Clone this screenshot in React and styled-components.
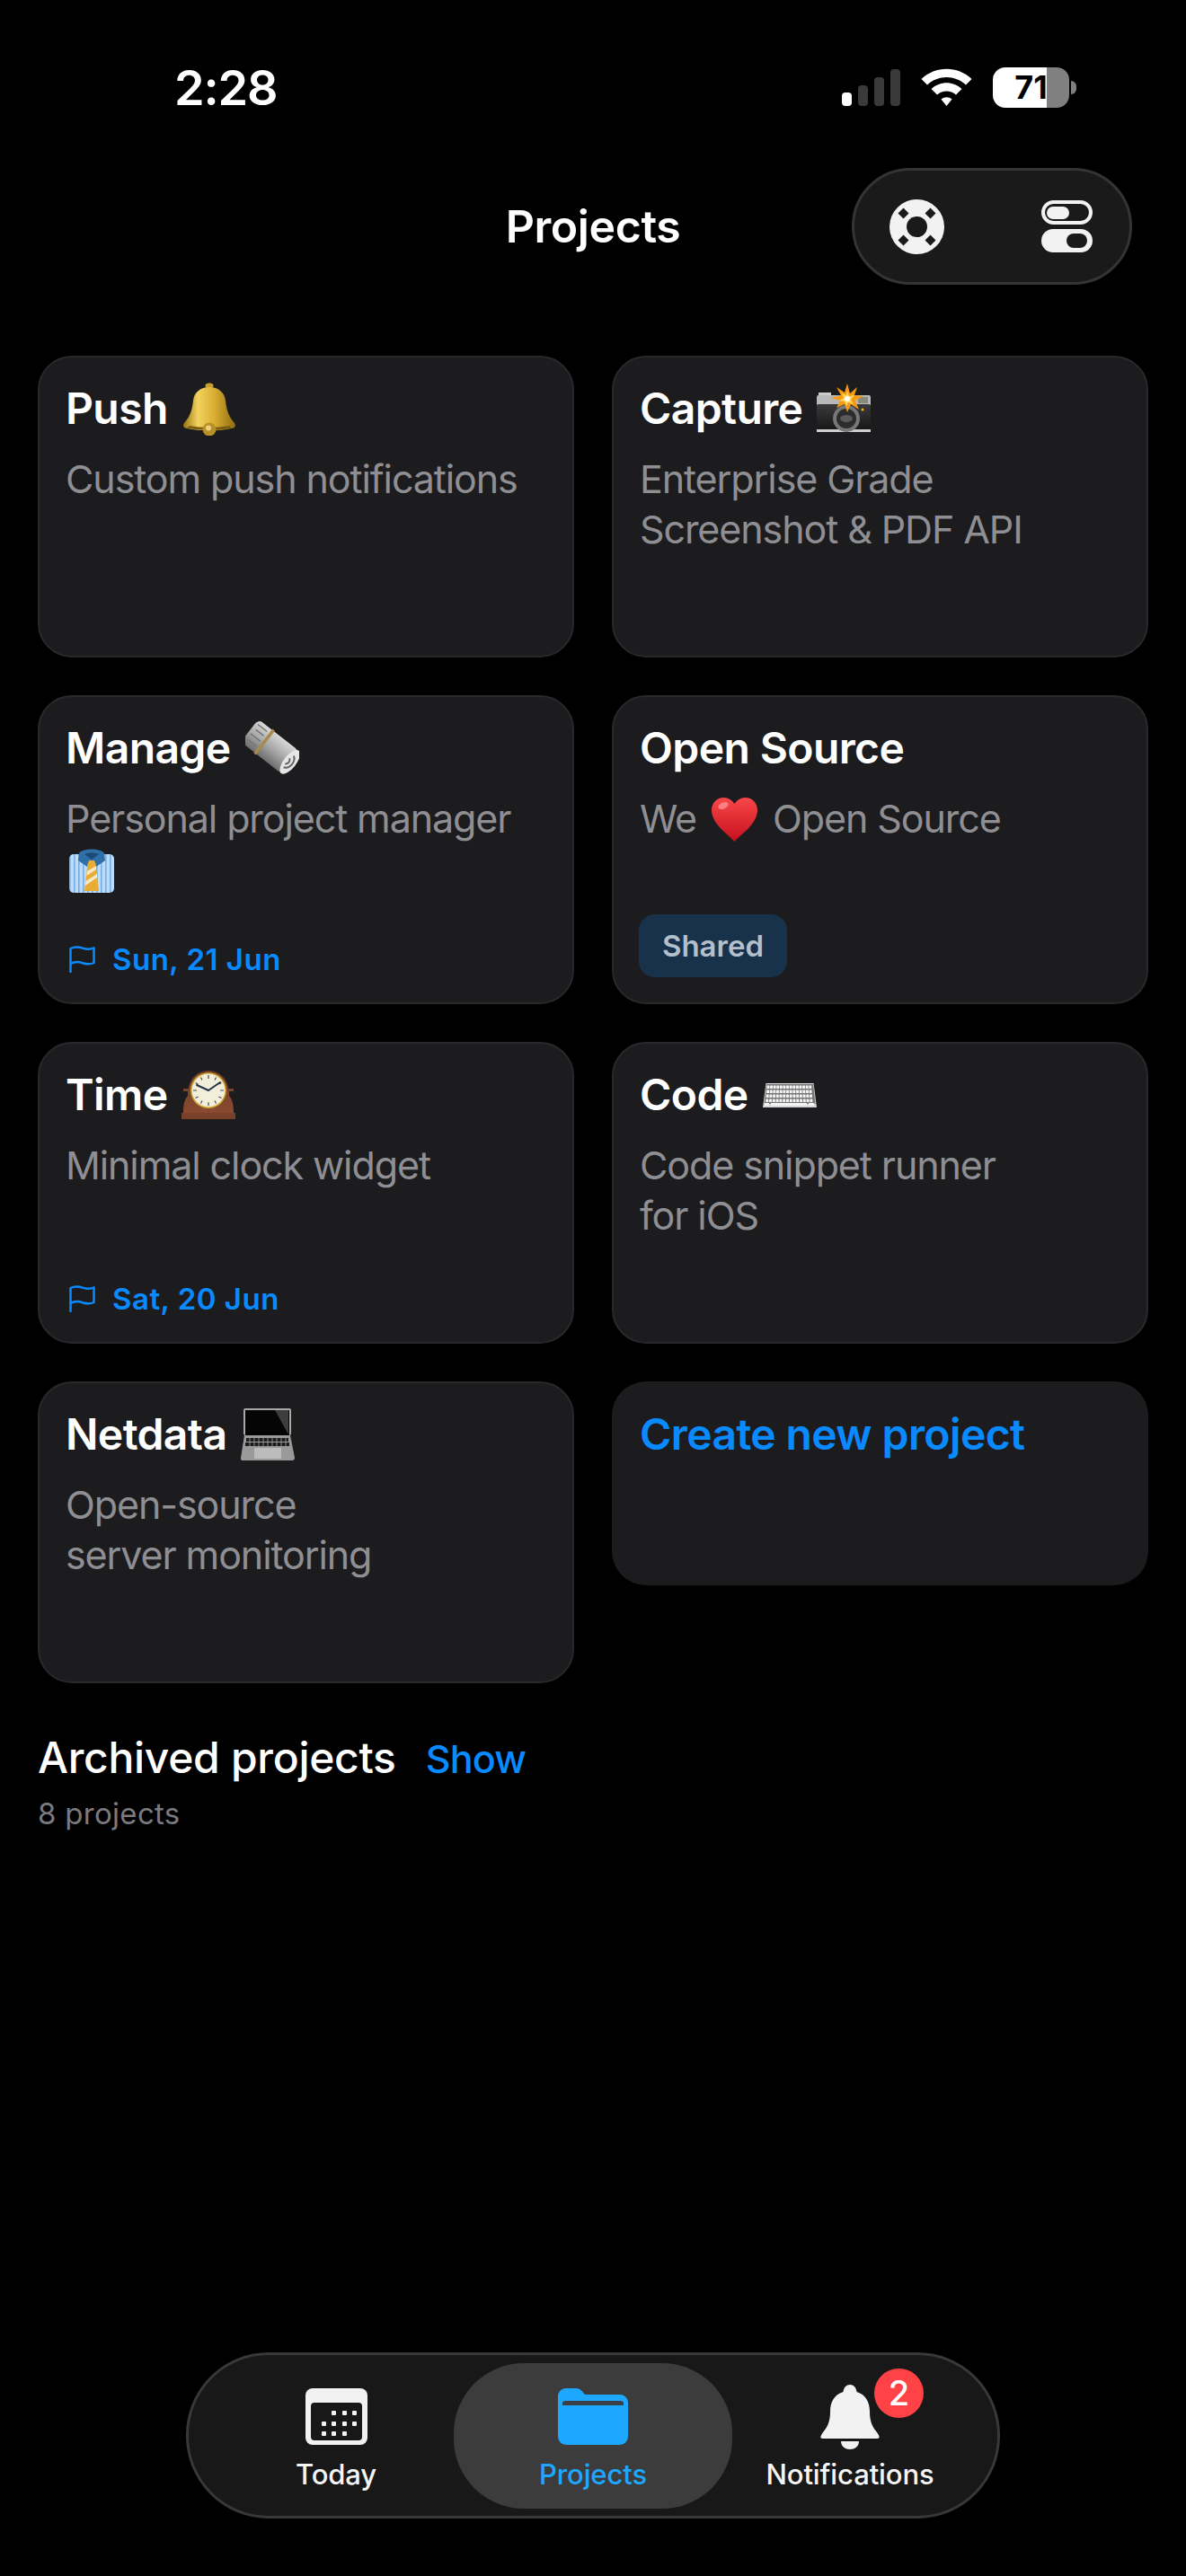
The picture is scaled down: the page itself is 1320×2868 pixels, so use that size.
import React from 'react';
import styled, { createGlobalStyle } from 'styled-components';

const GlobalStyle = createGlobalStyle`
  html, body {
    margin: 0;
    padding: 0;
    background: #000;
  }
  body {
    font-family: Inter, "Liberation Sans", sans-serif;
    color: #fff;
  }
`;

const Page = styled.div`
  width: 1320px;
  min-height: 2868px;
  box-sizing: border-box;
  padding-top: 70px;
  display: flex;
  flex-direction: column;
  background: #000;
`;

const StatusBar = styled.div`
  height: 54px;
  padding: 0 122px 0 194px;
  display: flex;
  align-items: center;
  justify-content: space-between;
`;

const Clock = styled.span`
  font-size: 54px;
  font-weight: 600;
  letter-spacing: -1.2px;
`;

const StatusIcons = styled.div`
  display: flex;
  align-items: center;
  gap: 23px;
`;

const Signal = styled.div`
  display: flex;
  align-items: flex-end;
  gap: 7px;
  height: 41px;
`;

const SignalBar = styled.span`
  width: 11px;
  border-radius: 4px;
  height: ${(p) => p.$h}px;
  background: ${(p) => (p.$on ? '#fff' : '#3a3a3a')};
`;

const Battery = styled.div`
  display: flex;
  align-items: center;
  gap: 2px;
`;

const BatteryBody = styled.div`
  width: 85px;
  height: 45px;
  border-radius: 14px;
  display: flex;
  align-items: center;
  justify-content: center;
  color: #000;
  font-size: 36px;
  font-weight: 700;
  background: linear-gradient(90deg, #fff 0 71%, #808080 71% 100%);
`;

const BatteryNub = styled.span`
  width: 6px;
  height: 15px;
  border-radius: 0 6px 6px 0;
  background: #808080;
`;

const Header = styled.header`
  margin-top: 63px;
  height: 130px;
  padding: 0 60px;
  display: grid;
  grid-template-columns: 1fr auto 1fr;
  align-items: center;
`;

const PageTitle = styled.h1`
  grid-column: 2;
  margin: 0;
  font-size: 50px;
  font-weight: 600;
  letter-spacing: -0.4px;
`;

const ActionPill = styled.div`
  grid-column: 3;
  justify-self: end;
  width: 312px;
  height: 130px;
  box-sizing: border-box;
  padding: 0 41px 0 39px;
  border: 3px solid #343434;
  border-radius: 65px;
  background: #1a1a1a;
  display: flex;
  align-items: center;
  justify-content: space-between;
`;

const Grid = styled.main`
  margin-top: 79px;
  padding: 0 42px;
  display: grid;
  grid-template-columns: 1fr 1fr;
  gap: 42px;
`;

const Card = styled.article`
  min-height: ${(p) => (p.$plain ? 227 : 336)}px;
  box-sizing: border-box;
  padding: 29px 29px 28px;
  border: 2px solid ${(p) => (p.$plain ? 'transparent' : '#29292c')};
  border-radius: 38px;
  background: #1c1c1e;
  display: flex;
  flex-direction: column;
  align-self: ${(p) => (p.$plain ? 'start' : 'stretch')};
`;

const CardTitle = styled.h2`
  margin: 0;
  height: 56px;
  display: flex;
  align-items: center;
  gap: 16px;
  font-size: 48px;
  font-weight: 600;
  line-height: 56px;
  letter-spacing: -0.6px;
  color: ${(p) => (p.$link ? '#0a8aff' : '#fff')};
`;

const CardDesc = styled.p`
  margin: 22px 0 0;
  min-height: 112px;
  font-size: 43px;
  line-height: 56px;
  letter-spacing: -1.1px;
  color: #8e8e93;
`;

const EmojiBox = styled.svg`
  width: 60px;
  height: 60px;
  flex-shrink: 0;
`;

const InlineEmoji = styled.svg`
  display: inline-block;
  vertical-align: top;
  margin: ${(p) => p.$m};
  width: ${(p) => p.$w}px;
  height: ${(p) => p.$h}px;
`;

const Footer = styled.div`
  margin-top: auto;
  padding-top: 23px;
`;

const DueDate = styled.div`
  display: flex;
  align-items: center;
  gap: 19px;
  height: 30px;
  margin: 0 0 5px 4px;
  font-size: 33px;
  font-weight: 600;
  letter-spacing: 0.5px;
  color: #0a8aff;
`;

const Badge = styled.span`
  display: inline-flex;
  align-items: center;
  justify-content: center;
  width: 165px;
  height: 70px;
  margin-left: -1px;
  border-radius: 18px;
  background: #17324a;
  color: #b4bfcc;
  font-size: 33px;
  font-weight: 600;
`;

const Archived = styled.section`
  margin-top: 55px;
  padding: 0 42px;
`;

const ArchivedRow = styled.div`
  display: flex;
  align-items: baseline;
  gap: 33px;
`;

const ArchivedTitle = styled.h3`
  margin: 0;
  font-size: 48px;
  font-weight: 500;
  line-height: 56px;
  letter-spacing: -0.3px;
`;

const ShowLink = styled.a`
  font-size: 43px;
  font-weight: 500;
  letter-spacing: -0.8px;
  color: #0a8aff;
`;

const ArchivedCount = styled.div`
  margin-top: 14px;
  font-size: 33px;
  line-height: 40px;
  letter-spacing: 0.3px;
  color: #7a7a7f;
`;

const TabBar = styled.nav`
  margin: auto auto 64px;
  width: 906px;
  height: 185px;
  box-sizing: border-box;
  border: 3px solid #383838;
  border-radius: 92px;
  background: #181818;
  display: flex;
  align-items: center;
  justify-content: center;
`;

const Tab = styled.div`
  position: relative;
  box-sizing: border-box;
  width: ${(p) => (p.$active ? 310 : 286)}px;
  height: 162px;
  margin: ${(p) => (p.$active ? '0 -12px' : 0)};
  padding-top: 25px;
  border-radius: 78px;
  background: ${(p) => (p.$active ? '#3c3c3c' : 'transparent')};
  display: flex;
  flex-direction: column;
  align-items: center;
`;

const TabIcon = styled.div`
  position: relative;
  height: 66px;
  display: flex;
  align-items: flex-end;
  justify-content: center;
`;

const TabLabel = styled.span`
  margin-top: 14px;
  font-size: 31px;
  font-weight: 500;
  letter-spacing: -0.1px;
  color: ${(p) => (p.$active ? '#1ea7ff' : '#f5f5f5')};
`;

const BellGlyph = styled.svg`
  width: 66px;
  height: 72px;
  margin-bottom: -5px;
`;

const CountBadge = styled.span`
  position: absolute;
  top: -19px;
  left: 60px;
  width: 55px;
  height: 55px;
  border-radius: 50%;
  background: #ff4245;
  color: #fff;
  font-size: 38px;
  font-weight: 500;
  display: flex;
  align-items: center;
  justify-content: center;
`;

// status bar + toolbar icons

const WifiIcon = () => (
  <svg width="57" height="42" viewBox="0 0 57 42" fill="#fff">
    <path d="M0.5 12C16 -3 41 -3 56.5 12L50 18.5C38 7 19 7 7 18.5Z" />
    <path d="M11.5 23C21 14 36 14 45.5 23L39 29.5C33 24 24 24 18 29.5Z" />
    <path d="M22.5 34.5C26 31.5 31 31.5 34.5 34.5L28.5 42Z" />
  </svg>
);

const BuoyIcon = () => (
  <svg width="61" height="61" viewBox="0 0 61 61">
    <circle cx="30.5" cy="30.5" r="30.5" fill="#f2f2f2" />
    <circle cx="30.5" cy="30.5" r="11.5" fill="#1a1a1a" />
    <g fill="#1a1a1a">
      <path d="M15.5 9.5l6 6-6 6-6-6z" />
      <path d="M45.5 9.5l6 6-6 6-6-6z" />
      <path d="M15.5 39.5l6 6-6 6-6-6z" />
      <path d="M45.5 39.5l6 6-6 6-6-6z" />
    </g>
  </svg>
);

const TogglesIcon = () => (
  <svg width="57" height="58" viewBox="0 0 57 58">
    <rect x="2" y="2" width="53" height="23" rx="11.5" fill="none" stroke="#f2f2f2" strokeWidth="4" />
    <rect x="6" y="7" width="25" height="14" rx="7" fill="#f2f2f2" />
    <rect y="32" width="57" height="26" rx="13" fill="#f2f2f2" />
    <rect x="28" y="37" width="23" height="16" rx="8" fill="#1a1a1a" />
  </svg>
);

const FlagIcon = () => (
  <svg width="29" height="30" viewBox="0 0 29 30" fill="none" stroke="#0a8aff" strokeWidth="2.5" strokeLinecap="round" strokeLinejoin="round">
    <path d="M1.5 29V3C6 0.8 11 1.2 15 2.6C20 4.2 24 4.2 27.5 2.4V19C24 20.8 20 20.8 15 19.2C11 17.8 6 17.6 1.5 19.8" />
  </svg>
);

// tab bar icons

const CalendarIcon = () => (
  <svg width="69" height="63" viewBox="0 0 69 63">
    <rect width="69" height="63" rx="8" fill="#f2f2f2" />
    <rect x="6" y="16" width="57" height="42" rx="4" fill="#181818" />
    <g fill="#f2f2f2">
      {[[29, 25], [41, 25], [52, 25], [18, 37], [29, 37], [41, 37], [52, 37], [18, 48], [29, 48], [41, 48]].map(([x, y]) => (
        <rect key={`${x}-${y}`} x={x} y={y} width="5" height="5" rx="1" />
      ))}
    </g>
  </svg>
);

const FolderIcon = () => (
  <svg width="78" height="63" viewBox="0 0 78 63">
    <path d="M0 9C0 4 4 0 9 0H20C23 0 25 1 27 3.5L30 7H69C74 7 78 11 78 16V53C78 59 74 63 68 63H10C4 63 0 59 0 53Z" fill="#1ea7ff" />
    <path d="M5 19V17C5 15 6.5 14 8 14H70C71.5 14 73 15 73 17V19Z" fill="#3a3f45" />
  </svg>
);

const BellIcon = () => (
  <BellGlyph viewBox="0 0 66 72" fill="#f2f2f2">
    <path d="M33 0C29 0 26 3 25.5 8C15 11 11 20 11 30C11 41 8 47 3 53C0 57 0 59 1 59.5L2 60H64L65 59.5C66 59 66 57 63 53C58 47 55 41 55 30C55 20 51 11 40.5 8C40 3 37 0 33 0Z" />
    <path d="M23 63H43C43 69 38 72 33 72C28 72 23 69 23 63Z" />
  </BellGlyph>
);

// apple style emoji, drawn because no colour emoji font is available

const BellEmoji = () => (
  <EmojiBox viewBox="0 0 60 60">
    <defs>
      <linearGradient id="bellGold" x1="0" x2="1" y1="0" y2="0">
        <stop offset="0" stopColor="#97740f" />
        <stop offset="0.28" stopColor="#f3d25e" />
        <stop offset="0.6" stopColor="#d9ae32" />
        <stop offset="1" stopColor="#8f6c10" />
      </linearGradient>
    </defs>
    <ellipse cx="30" cy="4.5" rx="4.5" ry="3" fill="#c9a030" />
    <path d="M30 6C20 6 13 12 12 21C11 31 9 38 2 46C0 49 1 51 5 52C20 55 40 55 55 52C59 51 60 49 58 46C51 38 49 31 48 21C47 12 40 6 30 6Z" fill="url(#bellGold)" />
    <path d="M8 49C20 51.5 40 51.5 52 49L55 51.5C40 54.5 20 54.5 5 51.5Z" fill="#7a5c10" />
    <circle cx="30" cy="53" r="7.5" fill="#b89028" />
    <circle cx="29" cy="51.5" r="3" fill="#ecd27e" />
  </EmojiBox>
);

const NewspaperEmoji = () => (
  <EmojiBox viewBox="0 0 60 60">
    <defs>
      <linearGradient id="paperRoll" x1="0" x2="0" y1="0" y2="1">
        <stop offset="0" stopColor="#d9d9d9" />
        <stop offset="0.5" stopColor="#a9a9a9" />
        <stop offset="1" stopColor="#6e6e6e" />
      </linearGradient>
    </defs>
    <g transform="rotate(38 30 30)">
      <rect x="-2" y="14" width="58" height="32" rx="6" fill="url(#paperRoll)" />
      <path d="M1 19h13M3 25h11M1 32h14M3 39h12" stroke="#747474" strokeWidth="1.5" />
      <rect x="17" y="13" width="3.5" height="34" fill="#a88a4a" />
      <ellipse cx="55" cy="30" rx="7" ry="16" fill="#e6e6e6" />
      <path d="M54 22C60 25 60 37 53 39M52 27C55 29 55 33 52 35" stroke="#666" strokeWidth="2" fill="none" />
    </g>
  </EmojiBox>
);

const ShirtEmoji = () => (
  <InlineEmoji viewBox="0 0 50 50" $w={50} $h={50} $m="5px 0 0 4px">
    <defs>
      <pattern id="shirtStripe" width="5" height="10" patternUnits="userSpaceOnUse">
        <rect width="5" height="10" fill="#bcdcfa" />
        <rect width="1.6" height="10" fill="#78aee8" />
      </pattern>
    </defs>
    <rect y="7" width="50" height="43" rx="5" fill="url(#shirtStripe)" />
    <path d="M11 6C14 0 36 0 39 6L40 14L30 21L25 14L20 21L10 14Z" fill="#2f6fa8" />
    <path d="M17 7C20 5 30 5 33 7L25 13Z" fill="#1d4a78" />
    <path d="M22 14H28L29.5 18L33 48H17L20.5 18Z" fill="#e9ad34" />
    <path d="M20 26L30 20V24L19.5 31ZM18.5 37L31 29V33L18 42Z" fill="#f6e9c8" />
  </InlineEmoji>
);

const CameraEmoji = () => (
  <EmojiBox viewBox="0 0 60 60">
    <defs>
      <linearGradient id="camBody" x1="0" x2="0" y1="0" y2="1">
        <stop offset="0" stopColor="#3a3a3a" />
        <stop offset="1" stopColor="#161616" />
      </linearGradient>
    </defs>
    <path d="M2 12h14v3H2z" fill="#ccc" />
    <rect y="15" width="60" height="12" rx="2" fill="#b9b9b9" />
    <rect y="25" width="60" height="30" rx="2" fill="url(#camBody)" />
    <rect y="53" width="60" height="3" fill="#cfcfcf" />
    <rect x="46" y="17" width="11" height="7" fill="#8a8a7a" />
    <circle cx="51" cy="31" r="1.5" fill="#f4b400" />
    <circle cx="33" cy="41" r="15" fill="#777" />
    <circle cx="33" cy="41" r="11" fill="#2c2c2c" />
    <ellipse cx="33" cy="41" rx="7" ry="4" fill="#5a5a5a" />
    <path d="M34 2L37 13L45 6L42 15L52 16L43 21L47 31L38 25L34 34L31 25L22 29L26 21L16 18L27 15L22 6L31 12Z" fill="#f59a14" />
    <path d="M34 10L36 16L42 15L38 20L41 25L35 23L33 27L31 22L25 21L30 18L28 13L33 15Z" fill="#ffd65a" />
    <circle cx="34" cy="19" r="3" fill="#fff" />
  </EmojiBox>
);

const HeartEmoji = () => (
  <InlineEmoji viewBox="0 0 51 49" $w={51} $h={49} $m="5px 17px 0 17px">
    <defs>
      <linearGradient id="heartRed" x1="0" x2="0" y1="0" y2="1">
        <stop offset="0" stopColor="#f8474a" />
        <stop offset="1" stopColor="#c5101c" />
      </linearGradient>
    </defs>
    <path d="M25.5 49C20 42 0 30 0 14C0 6 6 0 13.5 0C18.5 0 23 3 25.5 7C28 3 32.5 0 37.5 0C45 0 51 6 51 14C51 30 31 42 25.5 49Z" fill="url(#heartRed)" />
    <ellipse cx="13" cy="9" rx="6" ry="3.5" fill="#ff9a9a" opacity="0.7" transform="rotate(-25 13 9)" />
  </InlineEmoji>
);

const ClockEmoji = () => (
  <EmojiBox viewBox="0 0 60 60">
    <defs>
      <linearGradient id="wood" x1="0" x2="0" y1="0" y2="1">
        <stop offset="0" stopColor="#6e3d28" />
        <stop offset="1" stopColor="#8a4a30" />
      </linearGradient>
    </defs>
    <path d="M2 23H8C9 12 18 3 30 3C42 3 51 12 52 23H58V26H53V31C57 35 58 42 58 50H2C2 42 3 35 7 31V26H2Z" fill="url(#wood)" />
    <rect y="50" width="60" height="7" fill="#7a412a" />
    <circle cx="30" cy="25" r="20" fill="#c9a12e" />
    <circle cx="30" cy="25" r="18.5" fill="#f3eeda" />
    <g stroke="#4a4a4a" strokeWidth="1.2">
      <path d="M30 8v4M30 38v4M13 25h4M43 25h4M21.5 10.5l1.5 3M38.5 10.5l-1.5 3M21.5 39.5l1.5-3M38.5 39.5l-1.5-3M15.5 16.5l3 1.5M44.5 16.5l-3 1.5M15.5 33.5l3-1.5M44.5 33.5l-3-1.5" />
    </g>
    <path d="M30 25L17 19M30 25L43 16" stroke="#26324a" strokeWidth="2" strokeLinecap="round" />
  </EmojiBox>
);

const KeyboardEmoji = () => {
  const rows = [19.5, 24.5, 29.5, 34.5];
  const keys = Array.from({ length: 14 }, (_, i) => i);
  return (
    <EmojiBox viewBox="0 0 60 60">
      <path d="M3.5 17H56.5L60 44H0Z" fill="#d8d8d8" />
      <path d="M4 18H56L58.5 40H1.5Z" fill="#777" />
      {rows.map((y, r) =>
        keys.map((i) => (
          <rect key={`${r}-${i}`} x={4.5 - r * 0.4 + i * (3.6 + r * 0.06)} y={y} width="2.9" height="3.5" rx="0.5" fill="#f4f4f4" />
        ))
      )}
      <rect x="9" y="39" width="40" height="3" fill="#f4f4f4" />
      <rect x="2" y="39" width="5" height="3" fill="#f4f4f4" />
      <rect x="51" y="39" width="6" height="3" fill="#f4f4f4" />
    </EmojiBox>
  );
};

const LaptopEmoji = () => (
  <EmojiBox viewBox="0 0 60 60">
    <rect x="3" y="1" width="53" height="30" rx="2" fill="#a8a8a8" />
    <rect x="5" y="3" width="49" height="28" fill="#050505" />
    <path d="M38 3H53V30Z" fill="#3d3d3d" />
    <path d="M4 31H55L60 56C60 58 59 59 57 59H2C0 59 0 58 0 56Z" fill="#9a9a9a" />
    <g fill="#1c1c1c">
      <rect x="6" y="34" width="47" height="4" />
      <rect x="5" y="39" width="49" height="4" />
    </g>
    <g stroke="#bdbdbd" strokeWidth="0.7">
      <path d="M10 34v9M15 34v9M20 34v9M25 34v9M30 34v9M35 34v9M40 34v9M45 34v9M50 34v9" />
    </g>
    <rect x="15" y="45" width="30" height="12" fill="#bcbcbc" />
  </EmojiBox>
);

const projects = [
  { title: 'Push', emoji: <BellEmoji />, desc: 'Custom push notifications' },
  { title: 'Capture', emoji: <CameraEmoji />, desc: <>Enterprise Grade<br />Screenshot &amp; PDF API</> },
  { title: 'Manage', emoji: <NewspaperEmoji />, desc: <>Personal project manager<br /><ShirtEmoji /></>, due: 'Sun, 21 Jun' },
  { title: 'Open Source', desc: <>We<HeartEmoji />Open Source</>, badge: 'Shared' },
  { title: 'Time', emoji: <ClockEmoji />, desc: 'Minimal clock widget', due: 'Sat, 20 Jun' },
  { title: 'Code', emoji: <KeyboardEmoji />, desc: <>Code snippet runner<br />for iOS</> },
  { title: 'Netdata', emoji: <LaptopEmoji />, desc: <>Open-source<br />server monitoring</> },
];

const App = () => (
  <Page>
    <GlobalStyle />
    <StatusBar>
      <Clock>2:28</Clock>
      <StatusIcons>
        <Signal>
          <SignalBar $h={15} $on />
          <SignalBar $h={23} />
          <SignalBar $h={32} />
          <SignalBar $h={41} />
        </Signal>
        <WifiIcon />
        <Battery>
          <BatteryBody>71</BatteryBody>
          <BatteryNub />
        </Battery>
      </StatusIcons>
    </StatusBar>

    <Header>
      <PageTitle>Projects</PageTitle>
      <ActionPill>
        <BuoyIcon />
        <TogglesIcon />
      </ActionPill>
    </Header>

    <Grid>
      {projects.map((p) => (
        <Card key={p.title}>
          <CardTitle>
            {p.title}
            {p.emoji}
          </CardTitle>
          <CardDesc>{p.desc}</CardDesc>
          {p.due && (
            <Footer>
              <DueDate>
                <FlagIcon />
                {p.due}
              </DueDate>
            </Footer>
          )}
          {p.badge && (
            <Footer>
              <Badge>{p.badge}</Badge>
            </Footer>
          )}
        </Card>
      ))}
      <Card $plain>
        <CardTitle $link>Create new project</CardTitle>
      </Card>
    </Grid>

    <Archived>
      <ArchivedRow>
        <ArchivedTitle>Archived projects</ArchivedTitle>
        <ShowLink>Show</ShowLink>
      </ArchivedRow>
      <ArchivedCount>8 projects</ArchivedCount>
    </Archived>

    <TabBar>
      <Tab>
        <TabIcon><CalendarIcon /></TabIcon>
        <TabLabel>Today</TabLabel>
      </Tab>
      <Tab $active>
        <TabIcon><FolderIcon /></TabIcon>
        <TabLabel $active>Projects</TabLabel>
      </Tab>
      <Tab>
        <TabIcon>
          <BellIcon />
          <CountBadge>2</CountBadge>
        </TabIcon>
        <TabLabel>Notifications</TabLabel>
      </Tab>
    </TabBar>
  </Page>
);

export default App;
